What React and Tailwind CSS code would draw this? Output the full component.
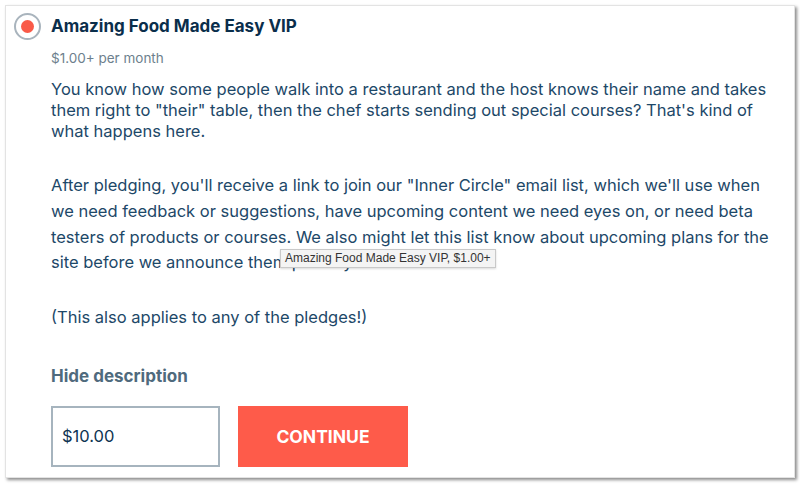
export default function App() {
  const body = "text-[16.5px] text-[#1d4868]";
  return (
    <div className="w-[800px] h-[485px] bg-white p-[5px]" style={{ fontFamily: 'Inter, "Liberation Sans", Arial, sans-serif' }}>
      <div className="relative w-[790px] h-[473px] bg-white border border-[#e3e3e3] shadow-[2px_2px_3px_rgba(0,0,0,0.45)] flex">
        <div className="pl-[8px] pt-[7px]">
          <div className="w-[27px] h-[27px] rounded-full border-2 border-[#a9b4bd] flex items-center justify-center">
            <div className="w-[13px] h-[13px] rounded-full bg-[#f95a48]" />
          </div>
        </div>
        <div className="ml-[10px] flex flex-col">
          <div className="mt-[7px] h-[26px] leading-[26px] text-[17px] font-bold text-[#0a2e4b] whitespace-nowrap">Amazing Food Made Easy VIP</div>
          <div className="mt-[9px] h-[20px] leading-[20px] text-[13.5px] text-[#6d7f8d]">$1.00+ per month</div>
          <div className={`mt-[11px] leading-[21px] ${body} whitespace-nowrap`}>
            <span className="block">You know how some people walk into a restaurant and the host knows their name and takes</span>
            <span className="block">them right to "their" table, then the chef starts sending out special courses? That's kind of</span>
            <span className="block">what happens here.</span>
          </div>
          <div className={`mt-[31px] leading-[25.8px] ${body} whitespace-nowrap`}>
            <span className="block">After pledging, you'll receive a link to join our "Inner Circle" email list, which we'll use when</span>
            <span className="block">we need feedback or suggestions, have upcoming content we need eyes on, or need beta</span>
            <span className="block">testers of products or courses. We also might let this list know about upcoming plans for the</span>
            <span className="block">site before we announce them publicly.</span>
          </div>
          <div className={`mt-[28px] leading-[26px] ${body}`}>(This also applies to any of the pledges!)</div>
          <div className="mt-[34px] h-[24px] leading-[24px] text-[17px] font-bold text-[#4f6a7d]">Hide description</div>
          <div className="mt-[18px] flex gap-[18px]">
            <div className="w-[169px] h-[61px] border-2 border-[#a6b4be] flex items-center pl-[9px] text-[16.5px] text-[#0e3452]">$10.00</div>
            <button className="w-[170px] h-[61px] bg-[#fe5b4a] text-white font-bold text-[17.5px]">CONTINUE</button>
          </div>
        </div>
        <div className="absolute left-[274px] top-[243px] h-[19px] px-[4px] bg-[#f4f4f4] border border-[#c9c9c9] shadow-[0_1px_2px_rgba(0,0,0,0.15)] text-[12px] leading-[17px] text-[#333] whitespace-nowrap" style={{ fontFamily: '"Liberation Sans", Arial, sans-serif' }}>Amazing Food Made Easy VIP, $1.00+</div>
      </div>
    </div>
  );
}
